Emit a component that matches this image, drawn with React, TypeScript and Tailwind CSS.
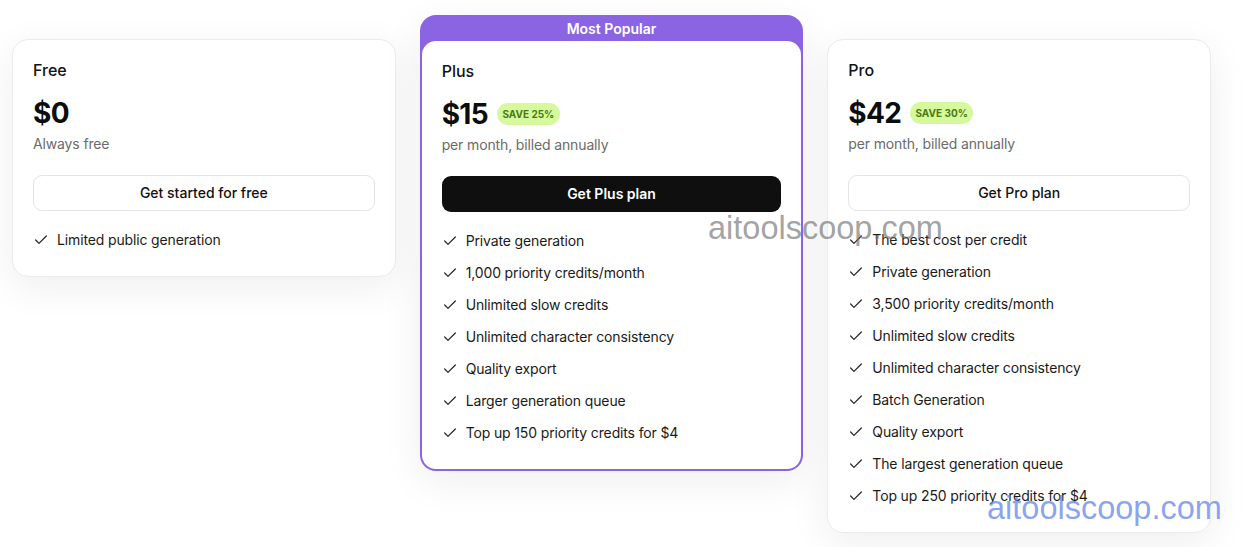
import React, { FC } from 'react'

type Plan = {
  name: string
  price: string
  save?: string
  note: string
  cta: string
  popular?: boolean
  features: string[]
}

const plans: Plan[] = [
  {
    name: 'Free',
    price: '$0',
    note: 'Always free',
    cta: 'Get started for free',
    features: ['Limited public generation'],
  },
  {
    name: 'Plus',
    price: '$15',
    save: 'SAVE 25%',
    note: 'per month, billed annually',
    cta: 'Get Plus plan',
    popular: true,
    features: [
      'Private generation',
      '1,000 priority credits/month',
      'Unlimited slow credits',
      'Unlimited character consistency',
      'Quality export',
      'Larger generation queue',
      'Top up 150 priority credits for $4',
    ],
  },
  {
    name: 'Pro',
    price: '$42',
    save: 'SAVE 30%',
    note: 'per month, billed annually',
    cta: 'Get Pro plan',
    features: [
      'The best cost per credit',
      'Private generation',
      '3,500 priority credits/month',
      'Unlimited slow credits',
      'Unlimited character consistency',
      'Batch Generation',
      'Quality export',
      'The largest generation queue',
      'Top up 250 priority credits for $4',
    ],
  },
]

const Check: FC = () => (
  <svg
    viewBox="0 0 24 24"
    className="h-4 w-4 shrink-0 text-[#222]"
    fill="none"
    stroke="currentColor"
    strokeWidth={1.8}
    strokeLinecap="round"
    strokeLinejoin="round"
  >
    <path d="M20 6 9 17l-5-5" />
  </svg>
)

const PlanBody: FC<{ plan: Plan }> = ({ plan }) => (
  <div className="px-5 pt-[18px] pb-[26px]">
    <div className="text-base leading-6 font-medium text-[#111]">{plan.name}</div>
    <div className="mt-[13px] flex h-9 items-center gap-[9px]">
      <span className="text-[28px] leading-9 font-bold tracking-tight text-[#0d0d0d]">
        {plan.price}
      </span>
      {plan.save && (
        <span className="flex h-[22px] w-[63px] items-center justify-center rounded-full bg-[#d6f99e] text-[10px] font-bold text-[#4a7a12]">
          {plan.save}
        </span>
      )}
    </div>
    <div className="mt-[3px] text-sm leading-5 tracking-[-0.01em] text-[#6b6b6b]">{plan.note}</div>
    <button
      className={`mt-[21px] flex h-9 w-full items-center justify-center rounded-[9px] text-sm ${
        plan.popular
          ? 'bg-[#0f0f0f] font-semibold text-white'
          : 'border border-[#e4e4e7] bg-white font-medium text-[#111]'
      }`}
    >
      {plan.cta}
    </button>
    <ul className="mt-[19px] flex flex-col gap-3">
      {plan.features.map((f) => (
        <li
          key={f}
          className="flex items-center gap-2 text-sm leading-5 tracking-[-0.01em] text-[#1a1a1a]"
        >
          <Check />
          <span>{f}</span>
        </li>
      ))}
    </ul>
  </div>
)

const PlanCard: FC<{ plan: Plan }> = ({ plan }) => {
  if (plan.popular) {
    return (
      <div className="rounded-2xl bg-[#8b64e3] px-[2px] pb-[2px] shadow-[0_10px_40px_rgba(0,0,0,0.07)]">
        <div className="flex h-[26px] items-center justify-center pt-[2px] text-sm font-semibold text-white">
          Most Popular
        </div>
        <div className="rounded-[14px] bg-white">
          <PlanBody plan={plan} />
        </div>
      </div>
    )
  }
  return (
    <div className="mt-6 rounded-2xl border border-[#ebebeb] bg-white shadow-[0_10px_40px_rgba(0,0,0,0.07)]">
      <PlanBody plan={plan} />
    </div>
  )
}

export default function App() {
  return (
    <div
      className="relative min-h-[547px] w-full bg-white pt-[15px]"
      style={{ fontFamily: 'Inter, "Noto Sans", sans-serif' }}
    >
      <div className="ml-3 grid w-[1199px] grid-cols-3 items-start gap-6">
        {plans.map((p) => (
          <PlanCard key={p.name} plan={p} />
        ))}
      </div>

      <div
        className="pointer-events-none absolute top-[212px] left-[708px] text-[32.5px] leading-8 text-[rgba(110,110,110,0.65)]"
        style={{ fontFamily: '"Liberation Sans", Arial, sans-serif' }}
      >
        aitoolscoop.com
      </div>
      <div
        className="pointer-events-none absolute top-[492px] left-[987px] text-[32.5px] leading-8 text-[rgba(100,135,235,0.75)]"
        style={{ fontFamily: '"Liberation Sans", Arial, sans-serif' }}
      >
        aitoolscoop.com
      </div>
    </div>
  )
}
